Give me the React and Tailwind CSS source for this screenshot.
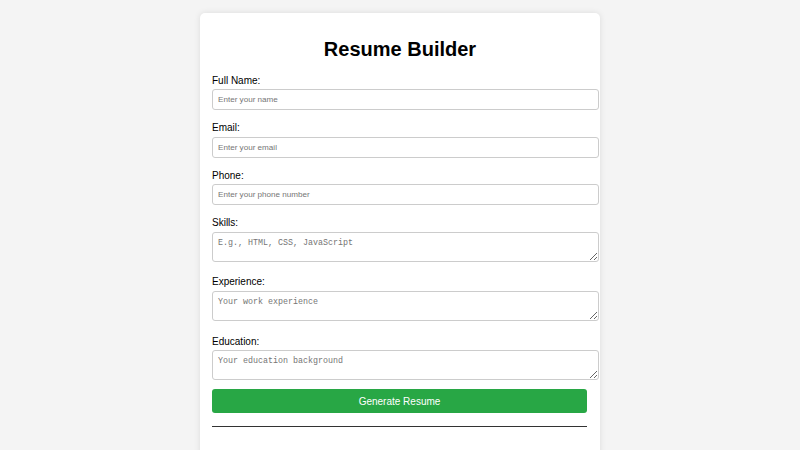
export default function App() {
  const inputs = [
    { label: "Full Name:", ph: "Enter your name" },
    { label: "Email:", ph: "Enter your email" },
    { label: "Phone:", ph: "Enter your phone number" },
  ];
  const areas = [
    { label: "Skills:", ph: "E.g., HTML, CSS, JavaScript", mb: "mb-[14.7px]" },
    { label: "Experience:", ph: "Your work experience", mb: "mb-[14.7px]" },
    { label: "Education:", ph: "Your education background", mb: "mb-[9px]" },
  ];
  return (
    <div className="min-h-[450px] bg-[#f4f4f4] pt-[12.5px] font-['Liberation_Sans',Arial,sans-serif] text-black">
      <div className="mx-auto w-[400px] rounded-[5px] bg-white px-[12px] pt-[12.5px] pb-[30px] shadow-[0_0_6px_rgba(0,0,0,0.1)]">
        <h1 className="my-[13.4px] text-center text-[20px] font-bold leading-[23px]">Resume Builder</h1>
        <form onSubmit={(e) => e.preventDefault()}>
          {inputs.map((f) => (
            <div key={f.label}>
              <label className="mb-[3px] block text-[10px] leading-[11.5px]">{f.label}</label>
              <input
                type="text"
                placeholder={f.ph}
                className="mb-[12px] block h-[21px] w-[387px] rounded-[3px] border border-[#ccc] px-[5px] font-['Liberation_Sans',Arial,sans-serif] text-[8.1px] outline-none placeholder:text-[#757575]"
              />
            </div>
          ))}
          {areas.map((f) => (
            <div key={f.label}>
              <label className="mb-[3px] block text-[10px] leading-[11.5px]">{f.label}</label>
              <textarea
                placeholder={f.ph}
                className={`${f.mb} block h-[30px] w-[387px] rounded-[3px] border border-[#ccc] px-[5px] py-[5px] font-['Liberation_Mono',monospace] text-[8.33px] leading-[10px] outline-none placeholder:text-[#757575]`}
              />
            </div>
          ))}
          <button
            type="submit"
            className="block h-[24px] w-[375px] rounded-[3px] bg-[#28a745] text-[10px] text-white"
          >
            Generate Resume
          </button>
        </form>
        <div className="mt-[12.5px] w-[375px] border-t border-[#333]"></div>
      </div>
    </div>
  );
}
